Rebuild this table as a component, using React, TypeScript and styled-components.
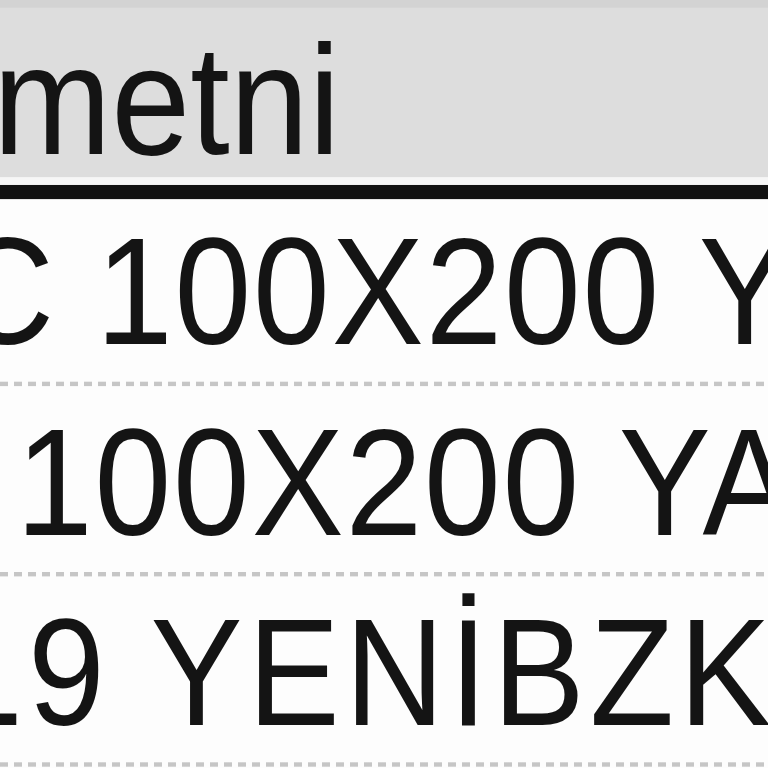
import React from "react";
import styled, { createGlobalStyle } from "styled-components";

const GlobalStyle = createGlobalStyle`
  html, body {
    margin: 0;
    padding: 0;
    background: #fdfdfd;
    overflow: hidden;
  }
  #root {
    width: 768px;
    height: 768px;
    overflow: hidden;
  }
`;

const Viewport = styled.div`
  width: 768px;
  height: 768px;
  overflow: hidden;
  background: #fdfdfd;
  font-family: "Liberation Sans", Arial, sans-serif;
  color: #141414;
`;

/* the grid was photographed slightly stretched vertically */
const Grid = styled.div`
  width: 768px;
  transform: scaleY(1.1);
  transform-origin: 0 0;
`;

const Header = styled.div`
  border-bottom: 13px solid #111111;
`;

const HeaderCell = styled.div`
  border-top: 7px solid #d3d3d3;
  border-bottom: 7px solid #f6f6f6;
  background: #dddddd;
  padding-top: 14px;
  height: 140px;
  line-height: 140px;
  font-size: 142px;
`;

const Row = styled.div`
  padding-top: 2px;
  padding-bottom: 7px;
  height: 164px;
  line-height: 164px;
  font-size: 138px;
  background-image: repeating-linear-gradient(
    90deg,
    #c6c6c6 0 8px,
    transparent 8px 14px
  );
  background-size: 100% 4px;
  background-repeat: no-repeat;
  background-position: left 0 bottom 3px;
`;

const Text = styled.div<{ $origin: number; $spacing: number }>`
  display: flex;
  white-space: pre;
  margin-left: ${(p) => p.$origin}px;
  letter-spacing: ${(p) => p.$spacing}px;
`;

const Lead = styled.span`
  display: flex;
  justify-content: flex-end;
  flex: none;
  width: 0;
  min-width: 0;
`;

const Main = styled.span`
  flex: none;
`;

type Line = { lead: string; main: string; origin: number; spacing: number };

const rows: Line[] = [
  { lead: "PVC ", main: "100X200 YATAK KILIFI", origin: 96, spacing: 1.8 },
  { lead: "FRM ", main: "100X200 YATAK", origin: 16, spacing: 1.8 },
  { lead: "BAZA 201", main: "9 YENİBZK", origin: 28, spacing: 5 },
];

export default function App() {
  return (
    <Viewport>
      <GlobalStyle />
      <Grid>
        <Header>
          <HeaderCell>
            <Text $origin={-7} $spacing={0}>
              <Lead>Malzeme kısa </Lead>
              <Main>metni</Main>
            </Text>
          </HeaderCell>
        </Header>
        {rows.map((r, i) => (
          <Row key={i}>
            <Text $origin={r.origin} $spacing={r.spacing}>
              <Lead>{r.lead}</Lead>
              <Main>{r.main}</Main>
            </Text>
          </Row>
        ))}
      </Grid>
    </Viewport>
  );
}
